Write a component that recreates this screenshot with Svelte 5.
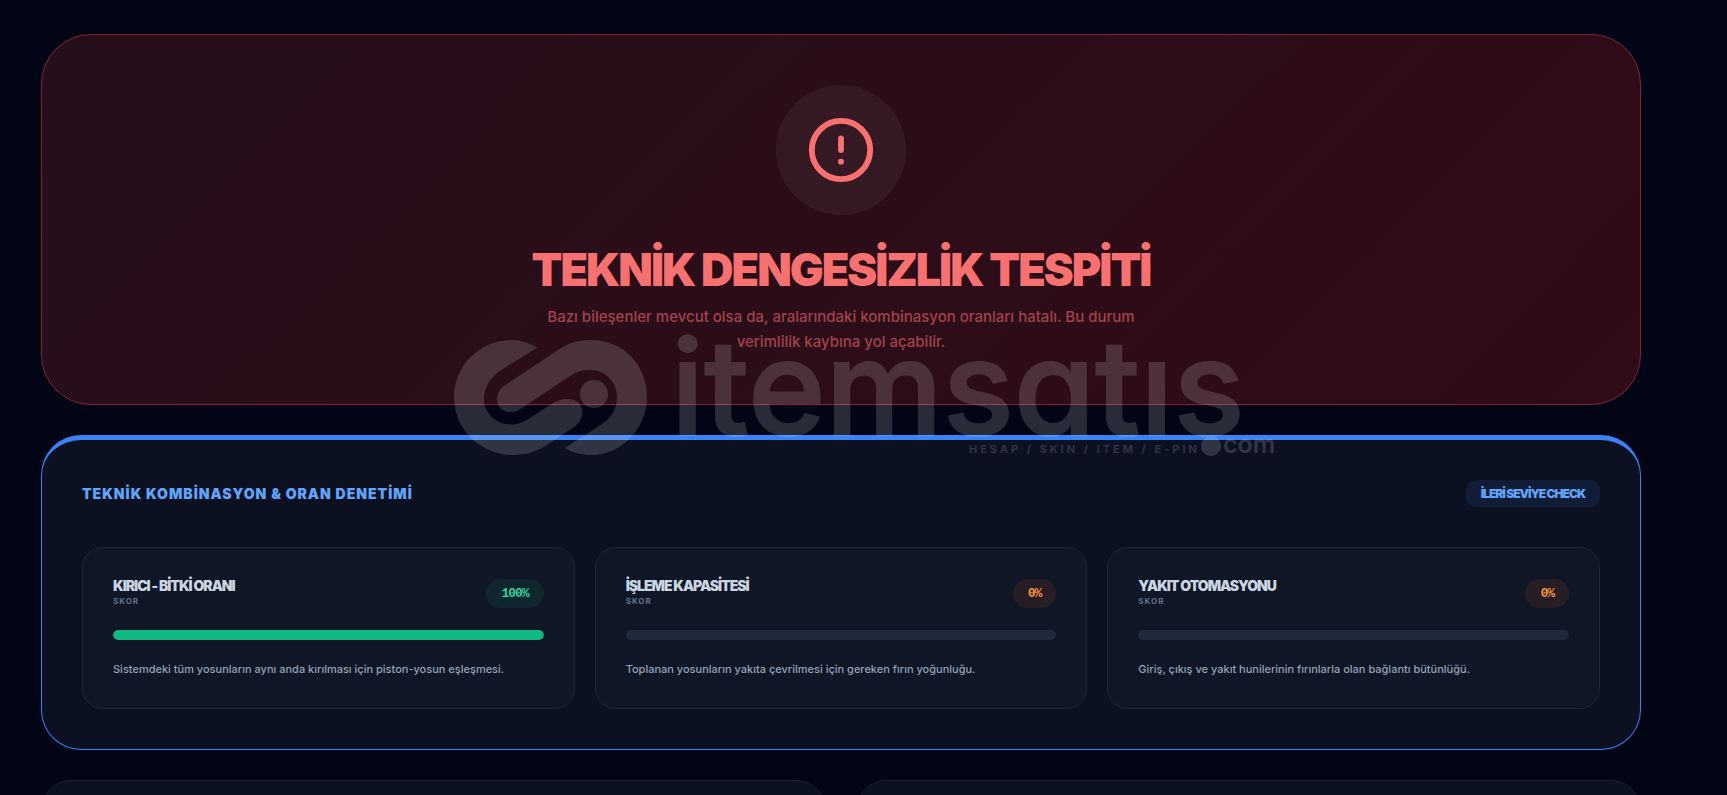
<script>
    const metrics = [
        {
            title: 'KIRICI - BİTKİ ORANI',
            score: 100,
            text: 'Sistemdeki tüm yosunların aynı anda kırılması için piston-yosun eşleşmesi.'
        },
        {
            title: 'İŞLEME KAPASİTESİ',
            score: 0,
            text: 'Toplanan yosunların yakıta çevrilmesi için gereken fırın yoğunluğu.'
        },
        {
            title: 'YAKIT OTOMASYONU',
            score: 0,
            text: 'Giriş, çıkış ve yakıt hunilerinin fırınlarla olan bağlantı bütünlüğü.'
        }
    ];
</script>

<main>
    <section class="verdict">
        <div class="verdict-icon">
            <svg viewBox="0 0 24 24" width="70" height="70" aria-hidden="true">
                <circle cx="12" cy="12" r="10" />
                <line x1="12" y1="8" x2="12" y2="12" />
                <line x1="12" y1="16" x2="12.01" y2="16" />
            </svg>
        </div>
        <h1>TEKNİK DENGESİZLİK TESPİTİ</h1>
        <p>Bazı bileşenler mevcut olsa da, aralarındaki kombinasyon oranları hatalı. Bu durum verimlilik kaybına yol açabilir.</p>
    </section>

    <section class="audit">
        <header>
            <h2>TEKNİK KOMBİNASYON &amp; ORAN DENETİMİ</h2>
            <span class="level">İLERİ SEVİYE CHECK</span>
        </header>
        <div class="metrics">
            {#each metrics as metric}
                <article class="metric">
                    <div class="metric-head">
                        <div>
                            <h3>{metric.title}</h3>
                            <small>SKOR</small>
                        </div>
                        <span class="score" class:good={metric.score >= 70}>{metric.score}%</span>
                    </div>
                    <div class="bar">
                        <div class="fill" style="width: {metric.score}%"></div>
                    </div>
                    <p>{metric.text}</p>
                </article>
            {/each}
        </div>
    </section>

    <div class="panels">
        <section class="panel"></section>
        <section class="panel"></section>
    </div>

    <svg class="watermark" viewBox="0 0 830 130" width="830" height="130" aria-hidden="true">
        <path d="M82.500 12.500 C74 8 66 5 56 5 C26 5 -1 30 -1 62 C-1 95 26 120 58 120 C72 120 82 116 92 110 L119 92 C132 83 130 64 112 64 C106 64 102 66 98 68 L75 83 C68 87 64 89.500 56 89.500 C40 89.500 29 77 29 64 C29 52 35 43 46 35 Z" />
        <path d="M110 113 C118 118 127 120 136 120 C168 120 192 92 192 62 C192 30 168 5 137 5 C121 5 112 9 103 15 L49 51 C38 59 40 77 56 77 C61 77 64 75 67 73 L112 43 C119 38 125 35 135 35 C151 35 162 47 162 62 C162 74 156 83 147 89 Z" />
        <circle cx="139" cy="59" r="14" />
        <text class="brand" x="216" y="100">itemsatıs</text>
        <text class="tagline" x="514" y="118">HESAP / SKIN / ITEM / E-PIN</text>
        <circle cx="756" cy="111" r="10" />
        <text class="tld" x="768" y="118">com</text>
    </svg>
</main>

<style>
    :global(body) {
        background: #020515;
        font-family: Inter, 'Liberation Sans', sans-serif;
        overflow: hidden;
    }
    main {
        position: relative;
        display: flex;
        flex-direction: column;
        gap: 30px;
        padding: 34px 86px 0 41px;
    }
    h1, h2, h3, p {
        margin: 0;
    }
    section, article {
        box-sizing: border-box;
    }
    .verdict {
        display: flex;
        flex-direction: column;
        align-items: center;
        padding: 50px;
        border: 1px solid #85232d;
        border-radius: 50px;
        background: linear-gradient(135deg, #250f1b, #310b16);
        text-align: center;
    }
    .verdict-icon {
        display: flex;
        padding: 30px;
        border-radius: 50%;
        background: rgba(255, 255, 255, 0.05);
    }
    .verdict-icon svg {
        fill: none;
        stroke: #f87171;
        stroke-width: 2;
        stroke-linecap: round;
    }
    h1 {
        margin: 27px 0 7px;
        color: #f87171;
        font-size: 45px;
        font-weight: 900;
        letter-spacing: -2px;
        line-height: 55px;
    }
    .verdict p {
        max-width: 600px;
        color: #a3424c;
        font-size: 15px;
        font-weight: 500;
        line-height: 25px;
    }
    .audit {
        padding: 40px;
        border: 1px solid #3b82f6;
        border-top-width: 5px;
        border-radius: 40px;
        background: #0c1122;
    }
    .audit header {
        display: flex;
        justify-content: space-between;
        align-items: center;
        margin-bottom: 40px;
    }
    h2 {
        color: #60a5fa;
        font-size: 14px;
        font-weight: 900;
        letter-spacing: 1px;
        line-height: 17px;
    }
    .level {
        padding: 6px 15px;
        border-radius: 10px;
        background: #111c37;
        color: #60a5fa;
        font-size: 12px;
        font-weight: 900;
        letter-spacing: -1px;
        line-height: 15px;
    }
    .metrics {
        display: grid;
        grid-template-columns: repeat(3, 1fr);
        gap: 20px;
    }
    .metric {
        padding: 30px;
        border: 1px solid #1b2636;
        border-radius: 20px;
        background: #0f1626;
    }
    .metric-head {
        display: flex;
        justify-content: space-between;
        align-items: center;
        height: 31px;
        margin-bottom: 21px;
    }
    h3 {
        color: #cbd5e1;
        font-size: 14px;
        font-weight: 900;
        letter-spacing: -1px;
        line-height: 16px;
    }
    small {
        display: block;
        color: #64748b;
        font-size: 8px;
        font-weight: 700;
        letter-spacing: 1px;
        line-height: 15px;
    }
    .score {
        padding: 7px 15px;
        border-radius: 15px;
        background: #271d24;
        color: #fb923c;
        font-family: 'Liberation Mono', monospace;
        font-size: 13px;
        font-weight: 700;
        letter-spacing: -1px;
        line-height: 15px;
    }
    .score.good {
        background: #0f262f;
        color: #34d399;
    }
    .bar {
        height: 10px;
        margin-bottom: 20px;
        border-radius: 5px;
        background: #1e293b;
        overflow: hidden;
    }
    .fill {
        height: 100%;
        border-radius: 5px;
        background: #10b981;
    }
    .metric p {
        color: #94a3b8;
        font-size: 11px;
        font-weight: 500;
        line-height: 18px;
    }
    .panels {
        display: grid;
        grid-template-columns: 1fr 1fr;
        gap: 30px;
    }
    .panel {
        min-height: 200px;
        border: 1px solid #171f30;
        border-radius: 30px;
        background: #0c1122;
    }
    .watermark {
        position: absolute;
        top: 335px;
        left: 455px;
        overflow: visible;
        fill: #fff;
        opacity: 0.15;
        pointer-events: none;
    }
    .brand {
        font-size: 132px;
        font-weight: 500;
        font-feature-settings: 'cv11';
        stroke: #fff;
        stroke-width: 2;
    }
    .tagline {
        font-size: 11px;
        font-weight: 600;
        letter-spacing: 3px;
    }
    .tld {
        font-size: 25px;
        font-weight: 600;
    }
</style>
